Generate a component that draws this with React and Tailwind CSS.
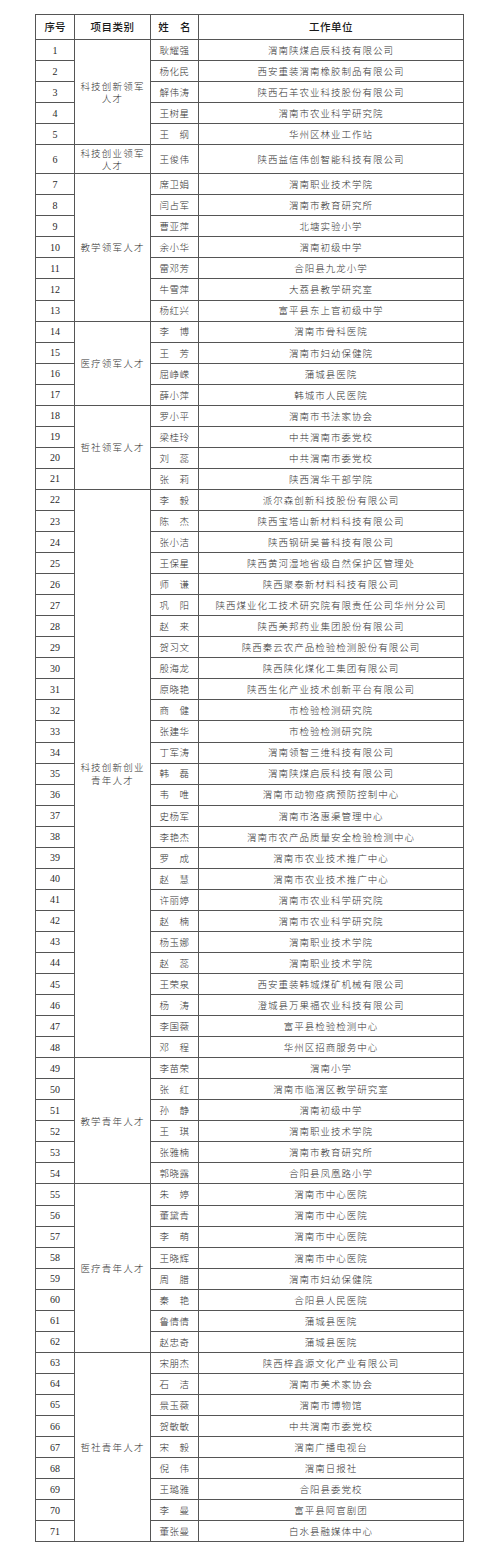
import React from 'react';

const groups = [
  {
    cat: ['科技创新领军', '人才'],
    rows: [
      ['耿耀强', '渭南陕煤启辰科技有限公司'],
      ['杨化民', '西安重装渭南橡胶制品有限公司'],
      ['解伟涛', '陕西石羊农业科技股份有限公司'],
      ['王树星', '渭南市农业科学研究院'],
      ['王纲', '华州区林业工作站'],
    ],
  },
  {
    cat: ['科技创业领军', '人才'],
    tall: true,
    rows: [['王俊伟', '陕西益信伟创智能科技有限公司']],
  },
  {
    cat: ['教学领军人才'],
    rows: [
      ['席卫娟', '渭南职业技术学院'],
      ['闫占军', '渭南市教育研究所'],
      ['曹亚萍', '北塘实验小学'],
      ['余小华', '渭南初级中学'],
      ['雷邓芳', '合阳县九龙小学'],
      ['牛雪萍', '大荔县教学研究室'],
      ['杨红兴', '富平县东上官初级中学'],
    ],
  },
  {
    cat: ['医疗领军人才'],
    rows: [
      ['李博', '渭南市骨科医院'],
      ['王芳', '渭南市妇幼保健院'],
      ['屈峥嵘', '蒲城县医院'],
      ['薛小萍', '韩城市人民医院'],
    ],
  },
  {
    cat: ['哲社领军人才'],
    rows: [
      ['罗小平', '渭南市书法家协会'],
      ['梁桂玲', '中共渭南市委党校'],
      ['刘蕊', '中共渭南市委党校'],
      ['张莉', '陕西渭华干部学院'],
    ],
  },
  {
    cat: ['科技创新创业', '青年人才'],
    rows: [
      ['李毅', '派尔森创新科技股份有限公司'],
      ['陈杰', '陕西宝塔山新材料科技有限公司'],
      ['张小洁', '陕西钢研昊普科技有限公司'],
      ['王保星', '陕西黄河湿地省级自然保护区管理处'],
      ['师谦', '陕西聚泰新材料科技有限公司'],
      ['巩阳', '陕西煤业化工技术研究院有限责任公司华州分公司'],
      ['赵来', '陕西美邦药业集团股份有限公司'],
      ['贺习文', '陕西秦云农产品检验检测股份有限公司'],
      ['殷海龙', '陕西陕化煤化工集团有限公司'],
      ['原晓艳', '陕西生化产业技术创新平台有限公司'],
      ['商健', '市检验检测研究院'],
      ['张建华', '市检验检测研究院'],
      ['丁军涛', '渭南领智三维科技有限公司'],
      ['韩磊', '渭南陕煤启辰科技有限公司'],
      ['韦唯', '渭南市动物疫病预防控制中心'],
      ['史杨军', '渭南市洛惠渠管理中心'],
      ['李艳杰', '渭南市农产品质量安全检验检测中心'],
      ['罗成', '渭南市农业技术推广中心'],
      ['赵慧', '渭南市农业技术推广中心'],
      ['许丽婷', '渭南市农业科学研究院'],
      ['赵楠', '渭南市农业科学研究院'],
      ['杨玉娜', '渭南职业技术学院'],
      ['赵蕊', '渭南职业技术学院'],
      ['王荣泉', '西安重装韩城煤矿机械有限公司'],
      ['杨涛', '澄城县万果福农业科技有限公司'],
      ['李国薇', '富平县检验检测中心'],
      ['邓程', '华州区招商服务中心'],
    ],
  },
  {
    cat: ['教学青年人才'],
    rows: [
      ['李苗荣', '渭南小学'],
      ['张红', '渭南市临渭区教学研究室'],
      ['孙静', '渭南初级中学'],
      ['王琪', '渭南职业技术学院'],
      ['张雅楠', '渭南市教育研究所'],
      ['郭晓露', '合阳县凤凰路小学'],
    ],
  },
  {
    cat: ['医疗青年人才'],
    rows: [
      ['朱婷', '渭南市中心医院'],
      ['董黛青', '渭南市中心医院'],
      ['李萌', '渭南市中心医院'],
      ['王晓辉', '渭南市中心医院'],
      ['周腊', '渭南市妇幼保健院'],
      ['秦艳', '合阳县人民医院'],
      ['鲁倩倩', '蒲城县医院'],
      ['赵忠奇', '蒲城县医院'],
    ],
  },
  {
    cat: ['哲社青年人才'],
    rows: [
      ['宋朋杰', '陕西梓鑫源文化产业有限公司'],
      ['石洁', '渭南市美术家协会'],
      ['景玉薇', '渭南市博物馆'],
      ['贺敏敏', '中共渭南市委党校'],
      ['宋毅', '渭南广播电视台'],
      ['倪伟', '渭南日报社'],
      ['王璐雅', '合阳县委党校'],
      ['李曼', '富平县阿官剧团'],
      ['董张曼', '白水县融媒体中心'],
    ],
  },
];

// two-char names are padded to the width of three
const fmtName = (n) => (n.length === 2 ? n[0] + '\u3000' + n[1] : n);

const cell = 'border border-[#555] text-center align-middle p-0';

export default function App() {
  let no = 0;

  return (
    <div className="bg-white w-[500px] min-h-[1555px] pt-[14px] pl-[35px] font-['Liberation_Serif','Noto_Sans_CJK_SC',serif] text-[#2a2a2a]">
      <table className="border-collapse w-[428px] table-fixed border border-[#444]">
        <colgroup>
          <col className="w-[39px]" />
          <col className="w-[76px]" />
          <col className="w-[48px]" />
          <col className="w-[265px]" />
        </colgroup>
        <thead>
          <tr className="h-[25px] font-['Noto_Sans_CJK_SC',sans-serif] font-medium text-[10.5px] text-[#1a1a1a]">
            <th className={cell + ' font-medium'}>序号</th>
            <th className={cell + ' font-medium tracking-[0.5px]'}>项目类别</th>
            <th className={cell + ' font-medium tracking-[0.3px]'}>姓　名</th>
            <th className={cell + ' font-medium tracking-[0.5px]'}>工作单位</th>
          </tr>
        </thead>
        <tbody>
          {groups.map((g) =>
            g.rows.map(([name, unit], i) => {
              no += 1;
              return (
                <tr key={no} className={g.tall ? 'h-[29px]' : 'h-[21.05px]'}>
                  <td className={cell + ' text-[10px]'}>{no}</td>
                  {i === 0 && (
                    <td
                      rowSpan={g.rows.length}
                      className={cell + " font-['Noto_Sans_CJK_SC',serif] font-light text-[9.5px] tracking-[1.2px] leading-[12.5px] text-[#333]"}
                    >
                      {g.cat.map((line) => (
                        <div key={line}>{line}</div>
                      ))}
                    </td>
                  )}
                  <td className={cell + " font-['Noto_Sans_CJK_SC',serif] font-light text-[9.5px] tracking-[0.5px] text-[#333]"}>
                    {fmtName(name)}
                  </td>
                  <td className={cell + " font-['Noto_Sans_CJK_SC',serif] font-light text-[9.5px] tracking-[1px] text-[#333]"}>
                    {unit}
                  </td>
                </tr>
              );
            })
          )}
        </tbody>
      </table>
    </div>
  );
}
